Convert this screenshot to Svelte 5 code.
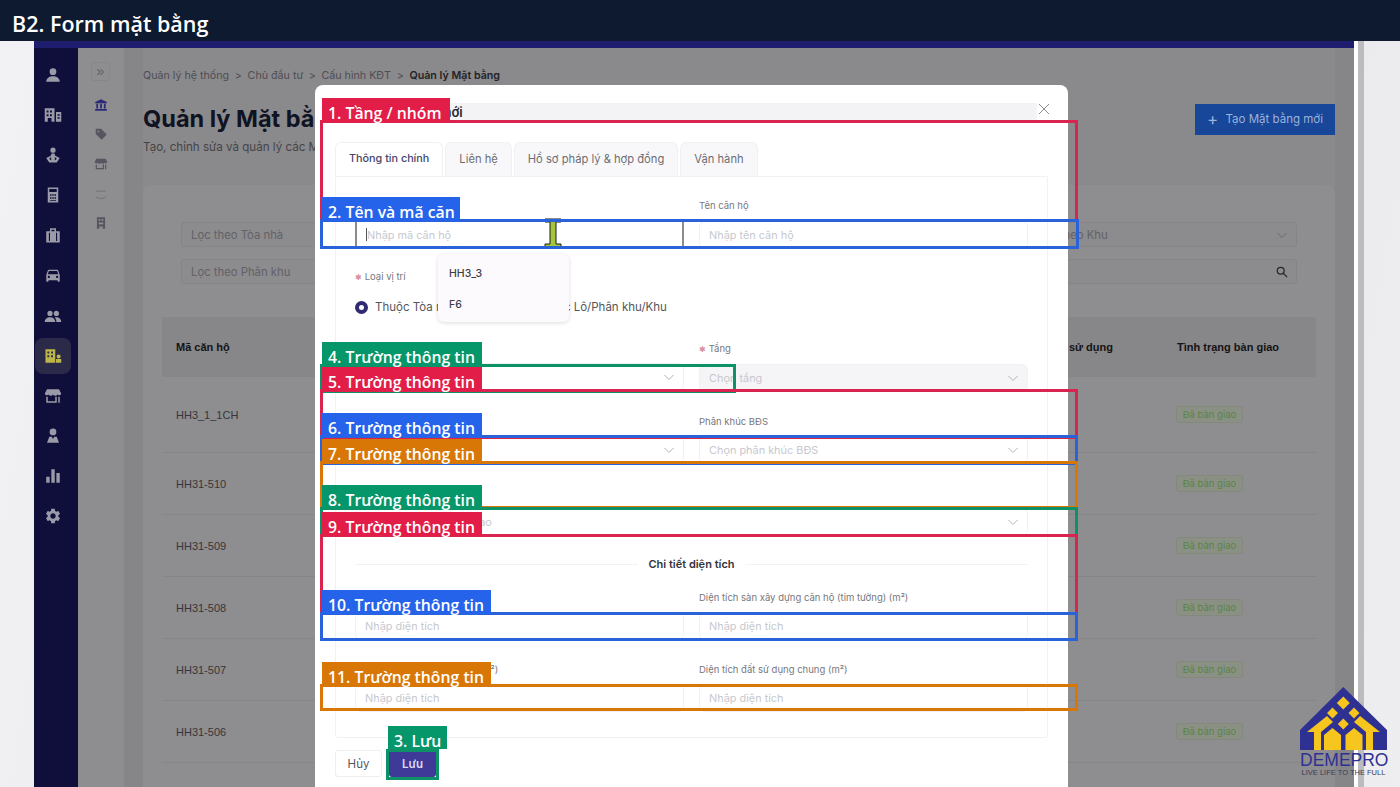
<script>
  const railIcons = [
    'M12 3a4.500 4.500 0 1 1 0 9 4.500 4.500 0 0 1 0-9zM3 21c0-5 4-7.500 9-7.500s9 2.500 9 7.500z',
    'M1 3h13v18H1zM3.500 6v2.500H6V6zM8 6v2.500h2.500V6zM3.500 11v2.500H6V11zM8 11v2.500h2.500V11zM5 16h5v5H5zM16 8h7v13h-7zM18 11v2h3v-2zM18 15v2h3v-2z',
    'M12 2a3.500 3.500 0 1 1 0 7 3.500 3.500 0 0 1 0-7zM10 10h4l1 3 6 3-4 6H7l-4-6 6-3zM9 15l-2 2 2 2 1-1-1-1 1-1zM15 15l-1 1 1 1-1 1 1 1 2-2z',
    'M5 2h14v20H5zM7 4v4h10V4zM8 11v2h2v-2zM11 11v2h2v-2zM14 11v2h2v-2zM8 15v2h2v-2zM11 15v2h2v-2zM14 15v2h2v-2zM8 19v1h8v-1z',
    'M8 7V3h8v4h5v15H3V7zM10 5v2h4V5zM6.500 9v11h1.500V9zM16 9v11h1.500V9z',
    'M18.920 6.010C18.720 5.420 18.160 5 17.500 5h-11c-.66 0-1.210.42-1.420 1.010L3 12v8c0 .55.45 1 1 1h1c.55 0 1-.45 1-1v-1h12v1c0 .55.45 1 1 1h1c.55 0 1-.45 1-1v-8l-2.080-5.990zM6.500 16c-.83 0-1.500-.67-1.500-1.500S5.670 13 6.500 13s1.500.67 1.500 1.500S7.330 16 6.500 16zm11 0c-.83 0-1.500-.67-1.500-1.500s.67-1.500 1.500-1.500 1.500.67 1.500 1.500-.67 1.500-1.500 1.500zM5 11l1.500-4.500h11L19 11H5z',
    'M8 5a3.500 3.500 0 1 1 0 7 3.500 3.500 0 0 1 0-7zM16.500 5a3.500 3.500 0 1 1 0 7 3.500 3.500 0 0 1 0-7zM1 20c0-4 3-6.500 7-6.500s7 2.500 7 6.500zM16.500 20c0-2.500-.8-4.800-2.500-6.200 5-1 9 1.200 9 6.200z',
    'M2 3h13v18H2zM4.500 6v2.500H7V6zM9.500 6v2.500H12V6zM4.500 11v2.500H7V11zM9.500 11v2.500H12V11zM16 16h7v5h-7zM19.500 10a2.700 2.700 0 1 1 0 5.400 2.700 2.700 0 0 1 0-5.400z',
    'M4 3h16l3 6a3 3 0 0 1-5 1 3.500 3.500 0 0 1-6 0 3.500 3.500 0 0 1-6 0 3 3 0 0 1-5-1zM3 13h2v6h10v-6h2v8H3zM19 13h2v8h-2z',
    'M12 2a4.500 4.500 0 1 1 0 9 4.500 4.500 0 0 1 0-9zM7 13h10l3 8H4zM10.500 13l1.500 3 1.500-3z',
    'M3 13h4.500v8H3zM9.800 3h4.500v18H9.800zM16.500 8H21v13h-4.500z',
    'M19.140 12.940c.04-.3.06-.61.06-.94 0-.32-.02-.64-.07-.94l2.030-1.580a.49.49 0 0 0 .12-.61l-1.920-3.320a.488.488 0 0 0-.59-.22l-2.390.96c-.5-.38-1.030-.7-1.620-.94l-.36-2.540a.484.484 0 0 0-.48-.41h-3.840c-.24 0-.43.17-.47.41l-.36 2.540c-.59.24-1.130.57-1.620.94l-2.390-.96c-.22-.08-.47 0-.59.22L2.740 8.870c-.12.21-.08.47.12.61l2.030 1.580c-.05.3-.09.63-.09.94s.02.64.07.94l-2.030 1.580a.49.49 0 0 0-.12.61l1.920 3.320c.12.22.37.29.59.22l2.390-.96c.5.38 1.030.7 1.620.94l.36 2.540c.05.24.24.41.48.41h3.840c.24 0 .44-.17.47-.41l.36-2.540c.59-.24 1.130-.56 1.620-.94l2.390.96c.22.08.47 0 .59-.22l1.920-3.320c.12-.22.07-.47-.12-.61l-2.010-1.580zM12 15.600c-1.980 0-3.600-1.620-3.600-3.600s1.620-3.600 3.600-3.600 3.600 1.620 3.600 3.600-1.620 3.600-3.600 3.600z'
  ];
  const subIcons = [
    'M12 2l10 5v2H2V7zM4 10h3v8H4zM10.500 10h3v8h-3zM17 10h3v8h-3zM2 19h20v3H2z',
    'M3 3h9l10 10-9 9L3 12zM7.500 6a1.500 1.500 0 1 0 0 3 1.500 1.500 0 0 0 0-3z',
    'M4 3h16l3 6a3 3 0 0 1-5 1 3.500 3.500 0 0 1-6 0 3.500 3.500 0 0 1-6 0 3 3 0 0 1-5-1zM3 13h2v6h10v-6h2v8H3zM19 13h2v8h-2z',
    'M4 6h16v2H4zM3 15c5 5 13 5 18 0v2c-5 5-13 5-18 0z',
    'M5 2h14v20h-4v-4H9v4H5zM8 5v3h3V5zM13 5v3h3V5zM8 11v3h8v-3z'
  ];
  const rows = ['HH3_1_1CH', 'HH31-510', 'HH31-509', 'HH31-508', 'HH31-507', 'HH31-506'];
  const boxes = [
    { n: '1. Tầng / nhóm', c: 'red', x: 320, y: 120, w: 758, h: 102, lw: 128 },
    { n: '2. Tên và mã căn', c: 'blue', x: 320, y: 219, w: 759, h: 30, lw: 138 },
    { n: '4. Trường thông tin', c: 'green', x: 320, y: 364, w: 416, h: 29, lw: 160 },
    { n: '5. Trường thông tin', c: 'red', x: 320, y: 389, w: 758, h: 50, lw: 160 },
    { n: '6. Trường thông tin', c: 'blue', x: 320, y: 435, w: 758, h: 30, lw: 160 },
    { n: '7. Trường thông tin', c: 'orange', x: 320, y: 461, w: 758, h: 48, lw: 160 },
    { n: '8. Trường thông tin', c: 'green', x: 320, y: 507, w: 758, h: 30, lw: 160 },
    { n: '9. Trường thông tin', c: 'red', x: 320, y: 534, w: 758, h: 81, lw: 160 },
    { n: '10. Trường thông tin', c: 'blue', x: 320, y: 612, w: 758, h: 29, lw: 169 },
    { n: '11. Trường thông tin', c: 'orange', x: 320, y: 684, w: 758, h: 27, lw: 169 }
  ];
</script>

<div class="page">
  <header class="title">B2. Form mặt bằng</header>

  <div class="stage">
    <div class="frame">
      <div class="topline"></div>
      <div class="app">
        <nav class="rail">
          {#each railIcons as d, i}
            <div class="rail-item" class:active={i === 7}>
              <svg viewBox="0 0 24 24" width="18" height="18"><path {d} fill-rule="evenodd" /></svg>
            </div>
          {/each}
        </nav>
        <aside class="sub">
          <div class="collapse">»</div>
          {#each subIcons as d, i}
            <svg class="sub-icon" class:current={i === 0} class:faint={i === 3} viewBox="0 0 24 24" width="14" height="14"><path {d} fill-rule="evenodd" /></svg>
          {/each}
        </aside>
        <div class="gutter"></div>
        <main class="content">
          <div class="crumbs">
            <span>Quản lý hệ thống</span><span>&gt;</span><span>Chủ đầu tư</span><span>&gt;</span><span>Cấu hình KĐT</span><span>&gt;</span><strong>Quản lý Mặt bằng</strong>
          </div>
          <div class="heading">
            <div>
              <h1>Quản lý Mặt bằng</h1>
              <p>Tạo, chỉnh sửa và quản lý các Mặt bằng</p>
            </div>
            <button class="create"><span class="plus">+</span> Tạo Mặt bằng mới</button>
          </div>
          <section class="panel">
            <div class="filters">
              <div class="fbox">Lọc theo Tòa nhà</div>
              <div class="fbox"></div>
              <div class="fbox"></div>
              <div class="fbox">Lọc theo Khu<svg class="chev" viewBox="0 0 12 12" width="12" height="12"><path d="M1.500 4l4.500 4.500L10.500 4" /></svg></div>
              <div class="fbox">Lọc theo Phân khu</div>
              <div class="fbox search">
                <svg viewBox="0 0 14 14" width="12" height="12"><circle cx="5.500" cy="5.500" r="4" /><path d="M8.500 8.500L13 13" /></svg>
              </div>
            </div>
            <div class="table">
              <div class="thead">
                <span>Mã căn hộ</span><span class="spacer"></span><span class="c-use">sử dụng</span><span class="c-state">Tình trạng bàn giao</span>
              </div>
              {#each rows as r, i}
                <div class="trow" class:first={i === 0}><span>{r}</span><span class="spacer"></span><span class="badge">Đã bàn giao</span></div>
              {/each}
            </div>
          </section>
        </main>
      </div>
    </div>
    <div class="scroll"></div>
  </div>

  <div class="modal">
    <div class="m-head"><span>Tạo Mặt bằng mới</span><svg viewBox="0 0 12 12" width="12" height="12"><path d="M1 1l10 10M11 1L1 11" /></svg></div>
    <div class="tabs">
      <span class="tab on">Thông tin chính</span>
      <span class="tab">Liên hệ</span>
      <span class="tab">Hồ sơ pháp lý &amp; hợp đồng</span>
      <span class="tab">Vận hành</span>
    </div>
    <div class="sheet">
      <div class="grid g-a">
        <div class="field"><span class="lab">&nbsp;</span><div class="inp focus"><i class="caret"></i>Nhập mã căn hộ</div></div>
        <div class="field"><span class="lab">Tên căn hộ</span><div class="inp">Nhập tên căn hộ</div></div>
      </div>
      <div class="loc">
        <span class="lab"><b>✱</b> Loại vị trí</span>
        <div class="radios">
          <span class="radio"></span><span>Thuộc Tòa nhà</span>
          <span class="radio off"></span><span>Thuộc Lô/Phân khu/Khu</span>
        </div>
      </div>
      <div class="grid g-b">
        <div class="field"><span class="lab">&nbsp;</span><div class="inp sel bare"><svg class="chev" viewBox="0 0 12 12" width="12" height="12"><path d="M1.500 4l4.500 4.500L10.500 4" /></svg></div></div>
        <div class="field"><span class="lab"><b>✱</b> Tầng</span><div class="inp sel dis">Chọn tầng<svg class="chev" viewBox="0 0 12 12" width="12" height="12"><path d="M1.500 4l4.500 4.500L10.500 4" /></svg></div></div>
        <div class="field"><span class="lab">&nbsp;</span><div class="inp sel bare"><svg class="chev" viewBox="0 0 12 12" width="12" height="12"><path d="M1.500 4l4.500 4.500L10.500 4" /></svg></div></div>
        <div class="field"><span class="lab">Phân khúc BĐS</span><div class="inp sel">Chọn phân khúc BĐS<svg class="chev" viewBox="0 0 12 12" width="12" height="12"><path d="M1.500 4l4.500 4.500L10.500 4" /></svg></div></div>
        <div class="field wide"><span class="lab">&nbsp;</span><div class="inp sel">Chọn tình trạng bàn giao<svg class="chev" viewBox="0 0 12 12" width="12" height="12"><path d="M1.500 4l4.500 4.500L10.500 4" /></svg></div></div>
      </div>
      <div class="divider"><span>Chi tiết diện tích</span></div>
      <div class="grid g-c">
        <div class="field"><span class="lab">&nbsp;</span><div class="inp">Nhập diện tích</div></div>
        <div class="field"><span class="lab">Diện tích sàn xây dựng căn hộ (tim tường) (m²)</span><div class="inp">Nhập diện tích</div></div>
        <div class="field"><span class="lab">Diện tích đất sử dụng riêng (m²)</span><div class="inp">Nhập diện tích</div></div>
        <div class="field"><span class="lab">Diện tích đất sử dụng chung (m²)</span><div class="inp">Nhập diện tích</div></div>
      </div>
    </div>
    <div class="actions">
      <button class="cancel">Hủy</button>
      <button class="save">Lưu</button>
    </div>
  </div>

  <div class="drop"><span>HH3_3</span><span>F6</span></div>

  <svg class="ibeam" viewBox="0 0 18 30" width="18" height="30"><path d="M1 1h16v3h-5v22h5v3H1v-3h5V4H1z" /></svg>

  {#each boxes as b}
    <div class="ann {b.c}" style="left:{b.x}px;top:{b.y}px;width:{b.w}px;height:{b.h}px"></div>
  {/each}
  {#each boxes as b}
    <div class="tag bg-{b.c}" style="left:{b.x + 2}px;top:{b.y - 22}px;width:{b.lw}px">{b.n}</div>
  {/each}
  <div class="ann green save-ring"></div>
  <div class="tag bg-green save-tag">3. Lưu</div>

  <div class="logo">
    <svg viewBox="0 0 87 63" width="87" height="63">
      <path fill="#2e3192" d="M43.300 0L87 43v20H0V43z" />
      <g fill="#f6c51e">
        <path d="M43.300 9.500l6.500 6.500-6.500 6.500-6.500-6.500zM32.500 20.500l5.500 5.500-5.500 5.500-5.500-5.500zM54 20.500l5.500 5.500-5.500 5.500-5.500-5.500zM43.300 31.500l5.500 5.500-5.500 5.500-5.500-5.500z" />
        <path d="M7 45l20-16 6 6-12 10v18h-7V45zM80 45L60 29l-6 6 12 10v18h7V45z" />
        <path d="M32.500 41l8.500 7v15H24V48zM54 41l-8.500 7v15h17V48z" />
      </g>
    </svg>
    <div class="l-name">DEMEPRO</div>
    <div class="l-sub">LIVE LIFE TO THE FULL</div>
  </div>
</div>

<style>
  :global(body) { margin: 0; font-family: "Liberation Sans", Arial, sans-serif; background: #eceef0; }
  .page { position: relative; width: 1400px; height: 787px; overflow: hidden; background: linear-gradient(100deg, #f2f2f4, #e2e3e6 60%, #eeeef0); }
  .title { height: 41px; box-sizing: border-box; padding: 11px 0 0 12px; background: #0d1a30; color: #fff; font: 600 21.500px/26px "Open Sans", sans-serif; }
  .stage { display: flex; height: 746px; padding-left: 34px; }
  .frame { width: 1320px; display: flex; flex-direction: column; background: #8b8a8c; }
  .scroll { width: 6px; border-left: 4px solid #fff; background: #bcbcbe; }
  .topline { height: 7px; background: #1e1d6e; flex: none; }
  .app { display: flex; flex: 1; min-height: 0; }
  .rail { width: 44px; flex: none; background: #100f3b; display: flex; flex-direction: column; align-items: flex-start; padding: 9px 0 0 1px; gap: 4.100px; box-sizing: border-box; }
  .rail-item { width: 36px; height: 36px; display: flex; align-items: center; justify-content: center; border-radius: 8px; }
  .rail-item svg { fill: #9a9aa8; }
  .rail-item.active { background: #2b2a49; }
  .rail-item.active svg { fill: #bdb74a; }
  .sub { width: 46px; flex: none; background: #8e8d8f; display: flex; flex-direction: column; align-items: center; padding-top: 14px; gap: 15.700px; box-sizing: border-box; }
  .collapse { width: 19px; height: 19px; margin-bottom: 1px; margin-left: -1px; border: 1px solid #878688; border-radius: 3px; text-align: center; font: 14px/16px "Liberation Sans", sans-serif; color: #5f5f66; box-sizing: border-box; }
  .sub-icon { fill: #565660; margin-left: -1px; }
  .sub-icon.current { fill: #2a2a78; }
  .sub-icon.faint { fill: #77767c; }
  .gutter { width: 19px; flex: none; background: #868587; }
  .content { flex: 1; min-width: 0; padding-right: 19px; background: linear-gradient(to left, #868587 19px, #8a898b 19px); }
  .crumbs { display: flex; gap: 5.700px; padding-top: 21px; font: 10.700px/14px "Inter", sans-serif; color: #4e4e54; }
  .crumbs strong { color: #232327; font-weight: 600; }
  .heading { display: flex; justify-content: space-between; align-items: flex-start; margin-top: 21px; }
  h1 { margin: 0; font: 700 23.500px/30px "Inter", sans-serif; color: #0f1322; }
  .heading p { margin: 6px 0 0; font: 11.600px/15px "Inter", sans-serif; color: #454549; }
  .create { width: 140px; height: 31px; background: #184698; border: 0; color: #9cb2d8; font: 11.500px/15px "Inter", sans-serif; padding: 0; }
  .plus { font-size: 17px; margin-right: 4px; vertical-align: -2px; }
  .panel { margin-top: 30px; height: 610px; border-radius: 8px 8px 0 0; background: #8e8d8f; padding: 37px 38px 0 38px; }
  .filters { display: grid; grid-template-columns: repeat(4, 1fr); gap: 12px; }
  .fbox { height: 25px; position: relative; border: 1px solid #858486; border-radius: 3px; padding: 0 9px; font: 11.300px/24px "Inter", sans-serif; color: #626267; background: #8c8b8d; box-sizing: border-box; }
  .fbox .chev { position: absolute; right: 8px; top: 6px; }
  .chev { fill: none; stroke: #6b6b70; stroke-width: 1; }
  .search { grid-column: span 3; }
  .search svg { position: absolute; right: 8px; top: 6px; fill: none; stroke: #28282c; stroke-width: 1.500; }
  .table { margin: 33px -19px 0; }
  .thead { height: 60px; background: #878688; display: flex; align-items: center; padding: 0 13px 0 14px; font: 700 11px/14px "Liberation Sans", sans-serif; color: #141416; }
  .spacer { flex: 1; }
  .c-use { margin-right: 64px; }
  .c-state { width: 126px; }
  .trow { height: 62px; display: flex; align-items: center; padding: 0 13px 0 14px; font: 11px/14px "Liberation Sans", sans-serif; color: #36363a; border-bottom: 1px solid #868587; box-sizing: border-box; }
  .trow.first { height: 76px; }
  .badge { width: 67px; margin-right: 60px; height: 17px; text-align: center; font: 9.500px/15px "Inter", sans-serif; color: #5a8544; border: 1px solid #84897e; background: #8b9085; border-radius: 3px; box-sizing: border-box; white-space: nowrap; }

  .modal { position: absolute; left: 315px; top: 85px; width: 753px; height: 702px; background: #fff; border-radius: 8px 8px 0 0; box-sizing: border-box; padding: 0 20px; }
  .m-head { height: 17px; margin: 18px -2px 0 -12px; display: flex; gap: 1px; align-items: flex-start; }
  .m-head span { flex: 1; height: 17px; padding-left: 28px; background: #f3f3f5; font: 600 13px/19px "Inter", sans-serif; color: #26262c; }
  .m-head svg { fill: none; stroke: #8c8c90; stroke-width: 1; }
  .tabs { display: flex; gap: 2px; margin-top: 22px; height: 34px; }
  .tab { padding: 0 13px; background: #f8f8fa; border: 1px solid #f1f1f4; border-bottom: 0; border-radius: 6px 6px 0 0; font: 11.200px/32px "Inter", sans-serif; color: #6d6d74; }
  .tab.on { background: #fff; color: #45456a; font-size: 10.800px; font-weight: 500; }
  .sheet { height: 562px; border: 1px solid #f2f2f4; border-radius: 0 0 3px 3px; padding: 0 19px; box-sizing: border-box; }
  .grid { display: grid; grid-template-columns: 329px 329px; column-gap: 15px; }
  .g-a { padding-top: 22px; }
  .g-b { margin-top: 26px; row-gap: 23px; }
  .g-b .wide { grid-column: 1 / 3; }
  .g-c { row-gap: 23px; margin-top: 20px; }
  .lab { display: block; font: 9.500px/13px "Inter", sans-serif; color: #77777d; margin-bottom: 8px; white-space: nowrap; }
  .g-a .lab, .loc .lab { margin-bottom: 9px; }
  .lab b { color: #d98f99; font-weight: 400; font-size: 8px; }
  .inp { position: relative; height: 28px; border: 1px solid #f1f1f4; border-radius: 6px; box-sizing: border-box; padding: 0 9px; font: 10.900px/27px "Inter", sans-serif; color: #c8c8cf; }
  .inp .chev { position: absolute; right: 8px; top: 7px; stroke: #b2b2b6; }
  .inp.dis { background: #f5f5f7; }
  .inp.focus { border-left: 2px solid #8c8c90; border-right: 2px solid #8c8c90; border-radius: 0; }
  .caret { display: inline-block; width: 1px; height: 13px; background: #555; vertical-align: -2px; }
  .loc { margin-top: 21px; }
  .radios { display: flex; align-items: center; font: 11.500px/18px "Inter", sans-serif; color: #55555c; margin-top: 14px; white-space: nowrap; }
  .radio { width: 13px; height: 13px; border: 4px solid #2f2b6e; border-radius: 50%; box-sizing: border-box; margin-right: 7px; }
  .radio.off { border: 1px solid #ccc; margin-left: 60px; }
  .divider { display: flex; align-items: center; margin-top: 21px; gap: 10px; font: 600 11px/14px "Inter", sans-serif; color: #33333a; }
  .divider::before, .divider::after { content: ""; flex: 1; height: 1px; background: #f2f2f4; }
  .actions { display: flex; gap: 7px; margin-top: 12px; }
  .cancel { width: 47px; height: 27px; border: 1px solid #eeeef0; border-radius: 3px; background: #fff; color: #55555c; font: 11.500px "Inter", sans-serif; padding: 0; }
  .save { width: 47px; height: 27px; border: 0; border-radius: 3px; background: #3f3a98; color: #dcdcf4; font: 600 11.500px "Inter", sans-serif; padding: 0; }

  .drop { position: absolute; left: 438px; top: 254px; width: 131px; height: 68px; box-sizing: border-box; background: #fdfafd; border-radius: 6px; box-shadow: 0 1px 4px rgba(0,0,0,.14); padding: 13px 11px 0; display: flex; flex-direction: column; gap: 17px; font: 500 10.500px/14px "Inter", sans-serif; color: #3d3d45; }
  .ibeam { position: absolute; left: 544px; top: 218px; }
  .ibeam path { fill: #a4c639; stroke: #1a1a1a; stroke-width: 1; }

  .ann { position: absolute; box-sizing: border-box; border: 3px solid; pointer-events: none; }
  .ann.red { border-color: #d9244f; }
  .ann.blue { border-color: #2a62d9; }
  .ann.green { border-color: #0d9268; }
  .ann.orange { border-color: #d97706; }
  .tag { position: absolute; height: 24px; box-sizing: border-box; padding: 6px 0 0 6px; white-space: nowrap; color: #fff; font: 600 15.800px/18px "Open Sans", sans-serif; }
  .bg-red { background: #e11d48; }
  .bg-blue { background: #2563eb; }
  .bg-green { background: #059669; }
  .bg-orange { background: #d97706; }
  .save-ring { left: 386px; top: 749px; width: 53px; height: 31px; }
  .save-tag { left: 388px; top: 726px; width: 59px; height: 23px; }

  .logo { position: absolute; left: 1300px; top: 687px; width: 87px; text-align: center; color: #2e3192; }
  .logo svg { display: block; }
  .l-name { font: 400 17.500px/19px "Liberation Sans", sans-serif; margin-top: 1px; white-space: nowrap; }
  .l-sub { font: 7.500px/9px "Liberation Sans", sans-serif; color: #3b3b55; margin-top: -2px; white-space: nowrap; }
</style>
